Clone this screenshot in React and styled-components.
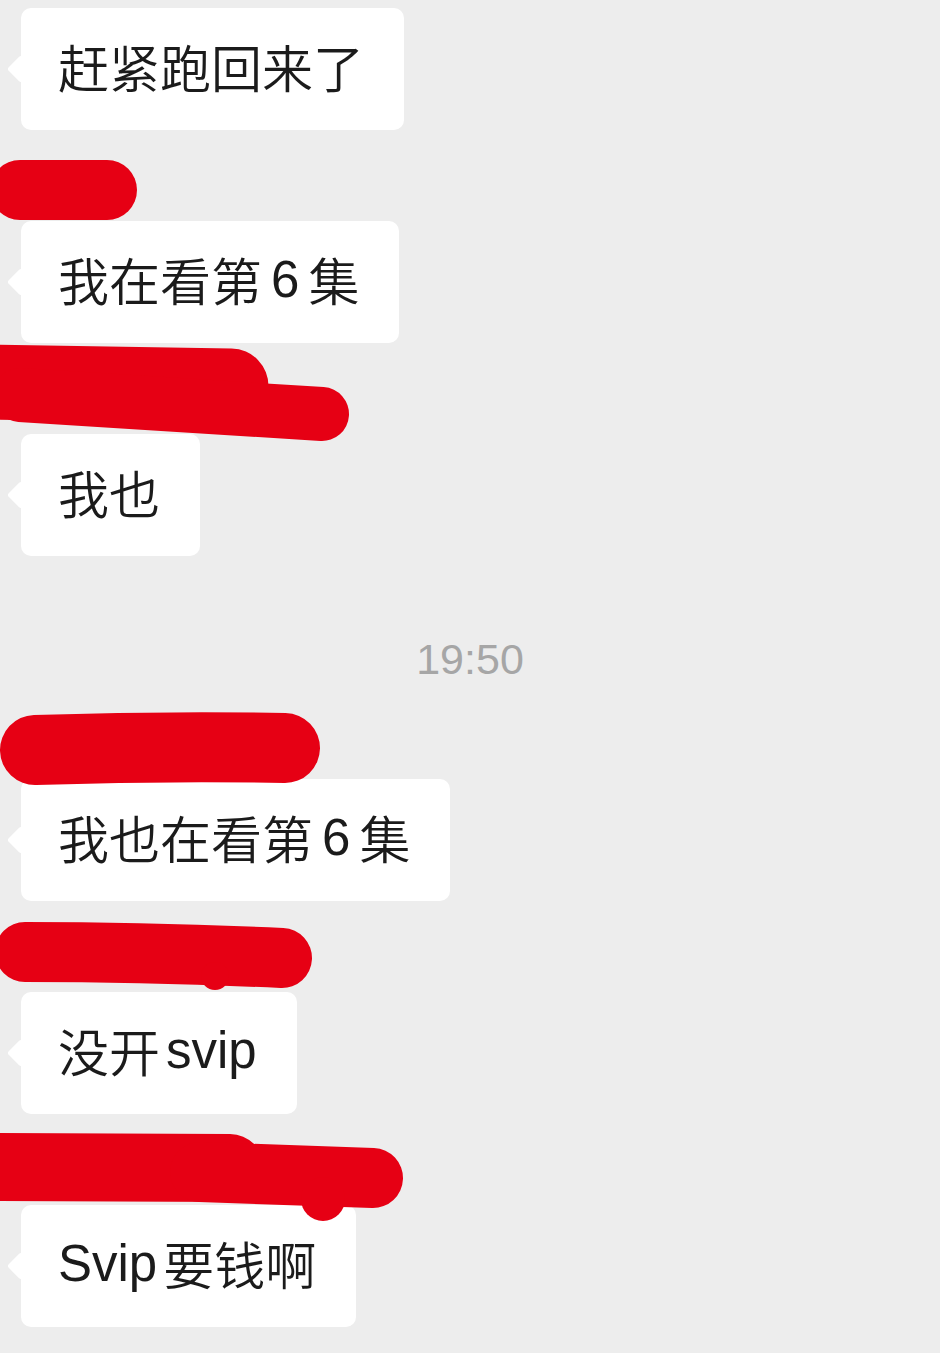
import React from 'react'
import styled, { createGlobalStyle } from 'styled-components'

const RED = '#e60014'

const GlobalStyle = createGlobalStyle`
  html, body {
    margin: 0;
    padding: 0;
    background: #ededed;
  }
  body {
    font-family: "Liberation Sans", "Noto Sans CJK SC", sans-serif;
  }
`

const Page = styled.div`
  width: 940px;
  min-height: 1353px;
  padding-top: 8px;
  box-sizing: border-box;
  background: #ededed;
  display: flex;
  flex-direction: column;
  align-items: flex-start;
  overflow: hidden;
`

const NameRow = styled.div`
  align-self: stretch;
  position: relative;
  height: 91px;
`

// the red marker strokes lie over the sender names (and a bit over the bubbles)
const Marker = styled.svg`
  position: absolute;
  left: 0;
  top: 0;
  z-index: 2;
  overflow: visible;
`

const Bubble = styled.div`
  position: relative;
  margin-left: 21px;
  height: 122px;
  box-sizing: border-box;
  display: flex;
  align-items: center;
  padding: 0 40px 6px 37px;
  background: #fff;
  border-radius: 10px;
  color: #1b1b1b;
  font-size: 51px;
  font-weight: 350;
  white-space: nowrap;

  &::before {
    content: '';
    position: absolute;
    left: -10px;
    top: 50%;
    width: 20px;
    height: 20px;
    background: #fff;
    border-radius: 3px;
    transform: translateY(-50%) rotate(45deg);
  }
`

const Latin = styled.span`
  font-weight: 400;
  margin: 0 ${p => p.$gap}px;
  &:first-child { margin-left: 0; }
  &:last-child { margin-right: 0; }
`

const Time = styled.div`
  align-self: stretch;
  height: 132px;
  box-sizing: border-box;
  padding-top: 74px;
  line-height: 58px;
  text-align: center;
  font-size: 43px;
  color: #a6a6a6;
`

const messages = [
  { text: '赶紧跑回来了' },
  {
    text: '我在看第6集',
    strokes: [{ d: 'M20 60 L107 60', w: 60 }],
  },
  {
    text: '我也',
    strokes: [
      { d: 'M-20 39 L231 43', w: 75 },
      { d: 'M20 52 L322 71', w: 54 },
    ],
  },
  { time: '19:50' },
  {
    text: '我也在看第6集',
    strokes: [{ d: 'M35 62 Q160 58 285 60', w: 70 }],
  },
  {
    text: '没开svip',
    strokes: [{ d: 'M25 51 Q150 51 282 57', w: 60 }],
    drops: [{ x: 215, y: 75, r: 14 }],
  },
  {
    text: 'Svip要钱啊',
    strokes: [
      { d: 'M-20 53 L230 54', w: 68 },
      { d: 'M200 58 L373 64', w: 60 },
    ],
    drops: [{ x: 323, y: 85, r: 22 }],
  },
]

function Text({ children }) {
  return children.split(/([A-Za-z0-9]+)/).filter(Boolean).map((part, i) =>
    /[A-Za-z0-9]/.test(part)
      ? <Latin key={i} $gap={/^\d+$/.test(part) ? 9 : 6}>{part}</Latin>
      : <span key={i}>{part}</span>
  )
}

function Scribble({ strokes, drops = [] }) {
  return (
    <Marker width='940' height='91'>
      {
        strokes.map((s, i) =>
          <path key={i} d={s.d} stroke={RED} strokeWidth={s.w} strokeLinecap='round' fill='none' />
        )
      }
      {
        drops.map((c, i) =>
          <circle key={i} cx={c.x} cy={c.y} r={c.r} fill={RED} />
        )
      }
    </Marker>
  )
}

export default function App() {
  return (
    <Page>
      <GlobalStyle />
      {
        messages.map((m, i) =>
          m.time
            ? <Time key={i}>{m.time}</Time>
            : (
              <React.Fragment key={i}>
                {m.strokes && <NameRow><Scribble strokes={m.strokes} drops={m.drops} /></NameRow>}
                <Bubble><Text>{m.text}</Text></Bubble>
              </React.Fragment>
            )
        )
      }
    </Page>
  )
}
